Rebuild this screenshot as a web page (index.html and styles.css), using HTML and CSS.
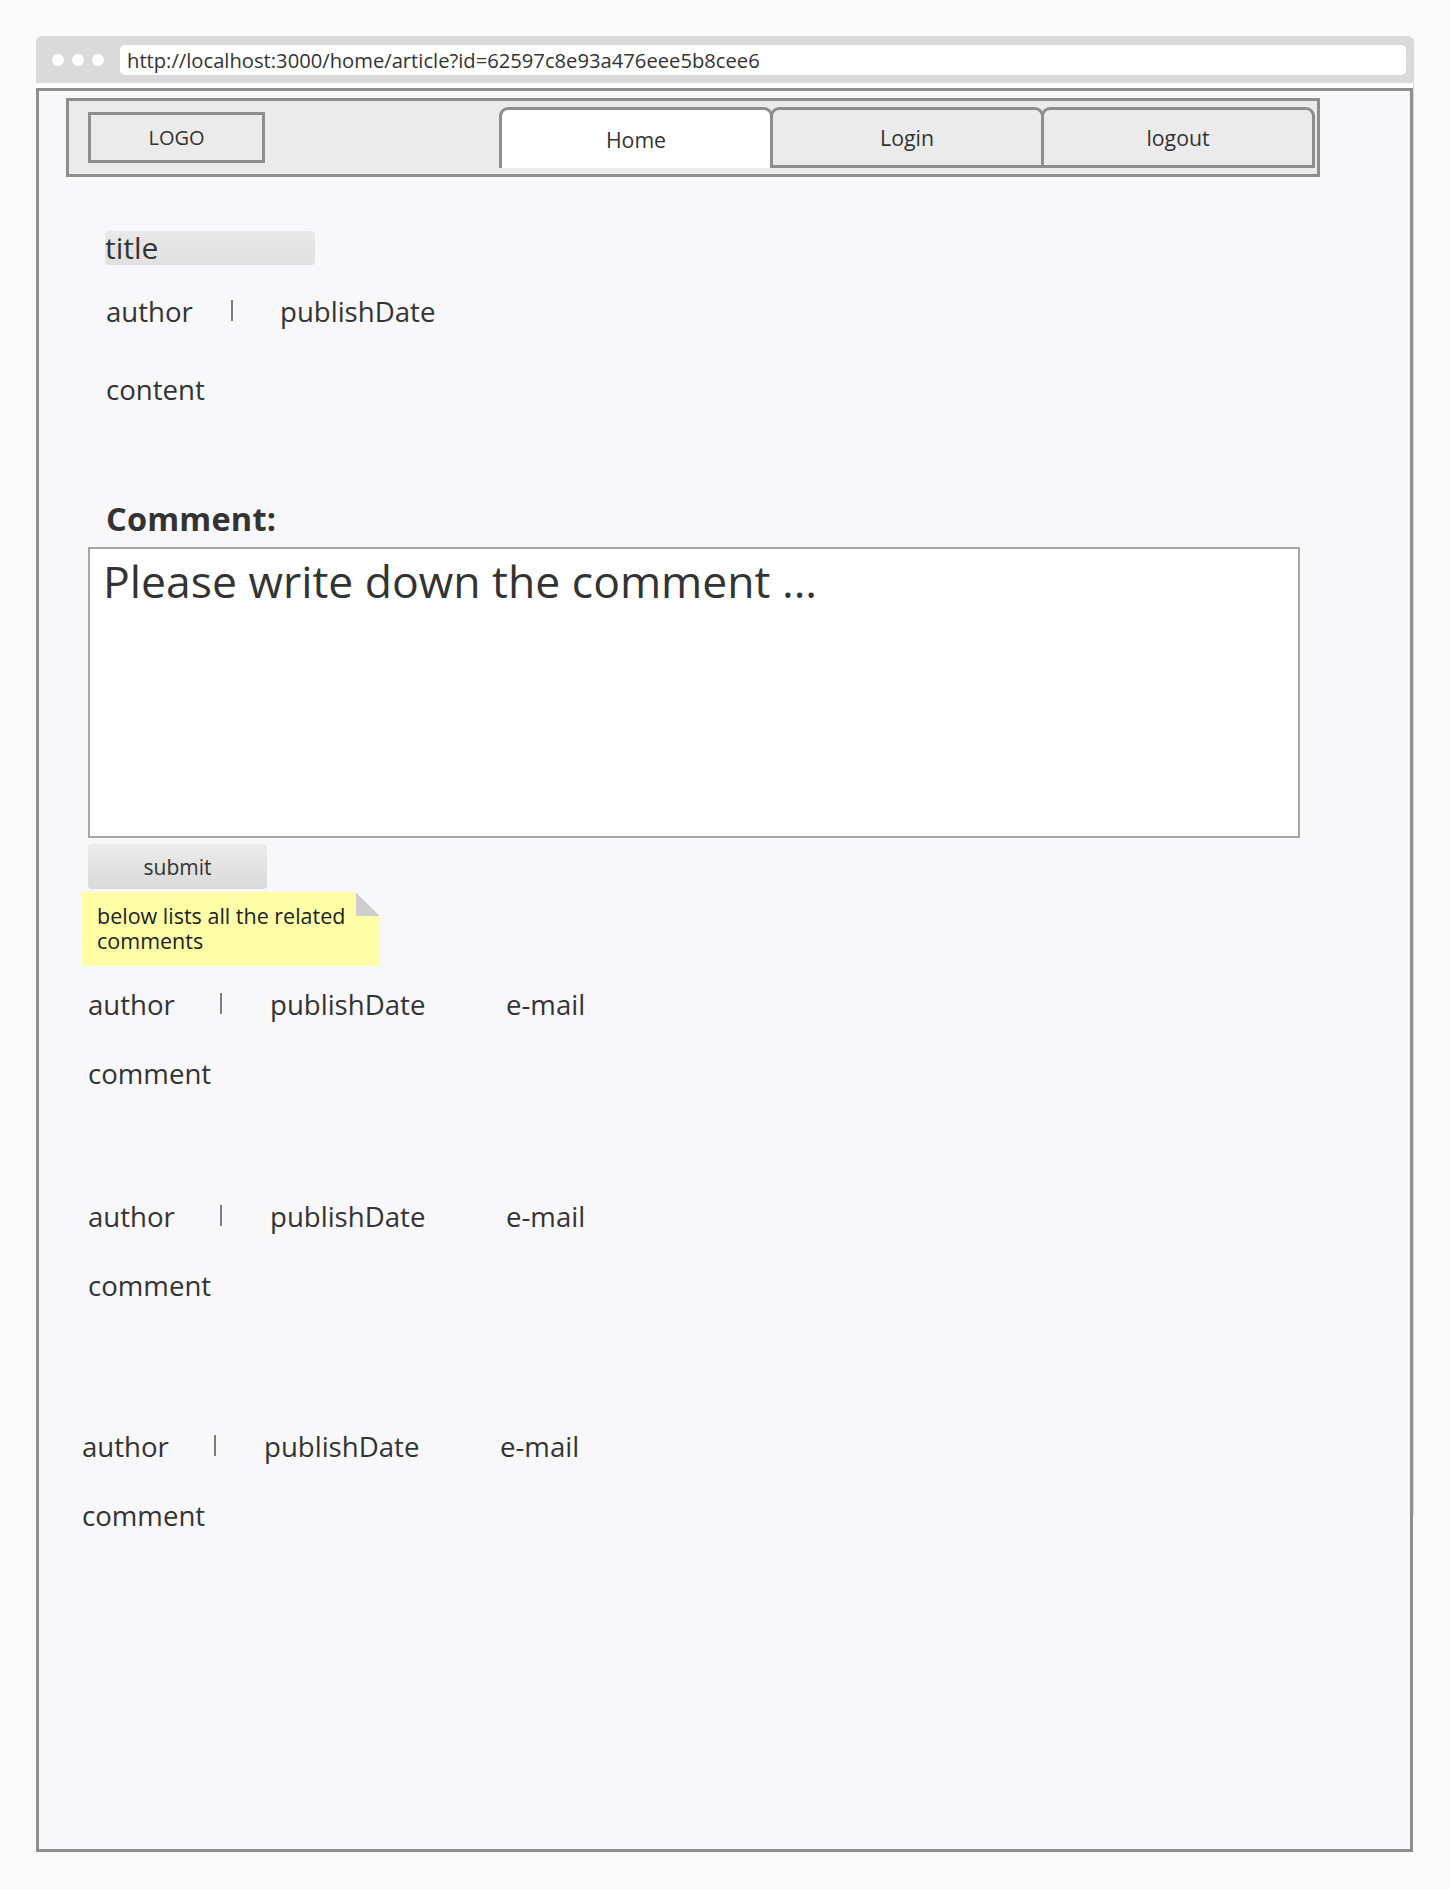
FILE: index.html
```html
<!DOCTYPE html>
<html lang="en">
<head>
<meta charset="utf-8">
<title>Article</title>
<link rel="stylesheet" href="styles.css">
</head>
<body>
<div class="browser">
  <div class="toolbar">
    <div class="dots"><span class="dot"></span><span class="dot"></span><span class="dot"></span></div>
    <div class="url">http://localhost:3000/home/article?id=62597c8e93a476eee5b8cee6</div>
  </div>
  <div class="sep"></div>
  <div class="frame">
    <header class="nav">
      <div class="logo">LOGO</div>
      <nav class="tabs">
        <a class="tab active">Home</a>
        <a class="tab">Login</a>
        <a class="tab">logout</a>
      </nav>
    </header>

    <article class="article">
      <h1 class="title">title</h1>
      <div class="meta">
        <span class="m-author">author</span>
        <span class="bar"></span>
        <span class="m-date">publishDate</span>
      </div>
      <p class="content">content</p>
      <h2 class="comment-label">Comment:</h2>
    </article>

    <form class="comment-form">
      <textarea class="comment-input" placeholder="Please write down the comment ..."></textarea>
      <button type="button" class="submit">submit</button>
    </form>

    <div class="note">below lists all the related comments</div>

    <ul class="comments">
      <li class="comment">
        <div class="c-meta"><span class="c-author">author</span><span class="bar"></span><span class="c-date">publishDate</span><span class="c-mail">e-mail</span></div>
        <div class="c-text">comment</div>
      </li>
      <li class="comment">
        <div class="c-meta"><span class="c-author">author</span><span class="bar"></span><span class="c-date">publishDate</span><span class="c-mail">e-mail</span></div>
        <div class="c-text">comment</div>
      </li>
      <li class="comment">
        <div class="c-meta"><span class="c-author">author</span><span class="bar"></span><span class="c-date">publishDate</span><span class="c-mail">e-mail</span></div>
        <div class="c-text">comment</div>
      </li>
    </ul>
  </div>
</div>
</body>
</html>
```

FILE: styles.css
```css
* { box-sizing: border-box; }

body {
  margin: 0;
  background: #fafafa;
  font-family: "Open Sans", "Noto Sans", sans-serif;
  color: #333;
}

/* browser chrome: gray window behind the viewport, ending at y=1515 */
.browser {
  margin: 36px 0 0 36px;
  width: 1378px;
  background: linear-gradient(#dadada, #dadada) no-repeat 0 40px / 1378px 1439px;
}

.toolbar {
  height: 47px;
  display: flex;
  align-items: flex-start;
  padding: 9px 8px 0 16px;
  background: #dadada;
  border-radius: 6px 6px 0 0;
}

.dots {
  display: flex;
  gap: 8px;
  margin-top: 9px;
}

.dot {
  width: 12px;
  height: 12px;
  border-radius: 50%;
  background: #fff;
}

.url {
  margin-left: 16px;
  flex: 1;
  height: 30px;
  background: #fff;
  border-radius: 5px;
  display: flex;
  align-items: center;
  padding-left: 7px;
  font-size: 20.2px;
  color: #333;
  white-space: nowrap;
}

.sep {
  width: 1377px;
  height: 5px;
  background: #fff;
}

.frame {
  width: 1377px;
  height: 1764px;
  border: 3px solid #8e8e8e;
  background: #f8f7fa;
  padding-top: 7px;
}

/* navigation */
.nav {
  margin-left: 27px;
  width: 1254px;
  height: 79px;
  border: 3px solid #8e8e8e;
  background: #ebebeb;
  display: flex;
  align-items: center;
  padding-left: 19px;
}

.logo {
  width: 177px;
  height: 51px;
  border: 3px solid #8e8e8e;
  display: flex;
  align-items: center;
  justify-content: center;
  font-size: 20px;
  color: #333;
}

.tabs {
  display: flex;
  margin-left: auto;
  margin-right: 2px;
}

.tab {
  width: 274px;
  height: 61px;
  border: 3px solid #8e8e8e;
  border-radius: 9px 9px 0 0;
  background: #ebebeb;
  display: flex;
  align-items: center;
  justify-content: center;
  font-size: 21.3px;
  color: #333;
}

.tab + .tab {
  margin-left: -3px;
}

.tab.active {
  background: #fff;
  border-bottom: none;
}

/* article */
.article {
  margin-left: 67px;
}

.title {
  margin: 54px 0 0 -1px;
  width: 210px;
  height: 34px;
  line-height: 34px;
  font-size: 30px;
  font-weight: 400;
  border-radius: 4px;
  background: linear-gradient(#e9e9e9, #e1e1e1);
  color: #333;
}

.meta {
  margin-top: 26px;
  display: flex;
  height: 40px;
  line-height: 40px;
  font-size: 27.6px;
}

.m-author { width: 125px; }
.m-date { margin-left: 47px; }

.bar {
  width: 2px;
  height: 21px;
  margin-top: 9px;
  background: #7d7d7d;
}

.content {
  margin: 38px 0 0;
  height: 40px;
  line-height: 40px;
  font-size: 27.6px;
}

.comment-label {
  margin: 90px 0 0;
  height: 40px;
  line-height: 40px;
  font-size: 32.5px;
  font-weight: 700;
  letter-spacing: 0.2px;
  color: #333;
}

/* form */
.comment-form {
  margin: 8px 0 0 49px;
  display: flex;
  flex-direction: column;
  align-items: flex-start;
}

.comment-input {
  display: block;
  width: 1212px;
  height: 291px;
  border: 2px solid #a6a6a6;
  background: #fff;
  padding: 1px 13px;
  font-family: "Open Sans", "Noto Sans", sans-serif;
  font-size: 44.5px;
  color: #333;
  resize: none;
  outline: none;
  margin: 0;
}

.comment-input::placeholder {
  color: #333;
  opacity: 1;
}

.submit {
  margin-top: 6px;
  width: 179px;
  height: 45px;
  border: none;
  border-radius: 4px;
  background: linear-gradient(#ececec, #d9d9d9);
  font-family: "Open Sans", "Noto Sans", sans-serif;
  font-size: 21px;
  color: #333;
  padding: 0;
}

/* sticky note */
.note {
  position: relative;
  margin: 3px 0 0 43px;
  width: 298px;
  height: 74px;
  background: #ffffa8;
  padding: 11px 26px 13px 15px;
  font-size: 21.5px;
  line-height: 25px;
  color: #222;
}

.note::after {
  content: "";
  position: absolute;
  top: 0;
  right: 0;
  width: 24px;
  height: 24px;
  background: linear-gradient(45deg, #cdcdcd 50%, #f8f7fa 50%);
}

/* comments */
.comments {
  list-style: none;
  margin: 0;
  padding: 0;
}

.comment {
  margin-left: 49px;
  font-size: 27.6px;
}

.comment:nth-child(1) { margin-top: 18px; }
.comment:nth-child(2) { margin-top: 103px; }
.comment:nth-child(3) { margin-top: 121px; margin-left: 43px; }

.c-meta {
  display: flex;
  height: 40px;
  line-height: 40px;
}

.c-author { width: 132px; }
.c-date { margin-left: 48px; width: 236px; }

.c-text {
  margin-top: 29px;
  height: 40px;
  line-height: 40px;
}
```
